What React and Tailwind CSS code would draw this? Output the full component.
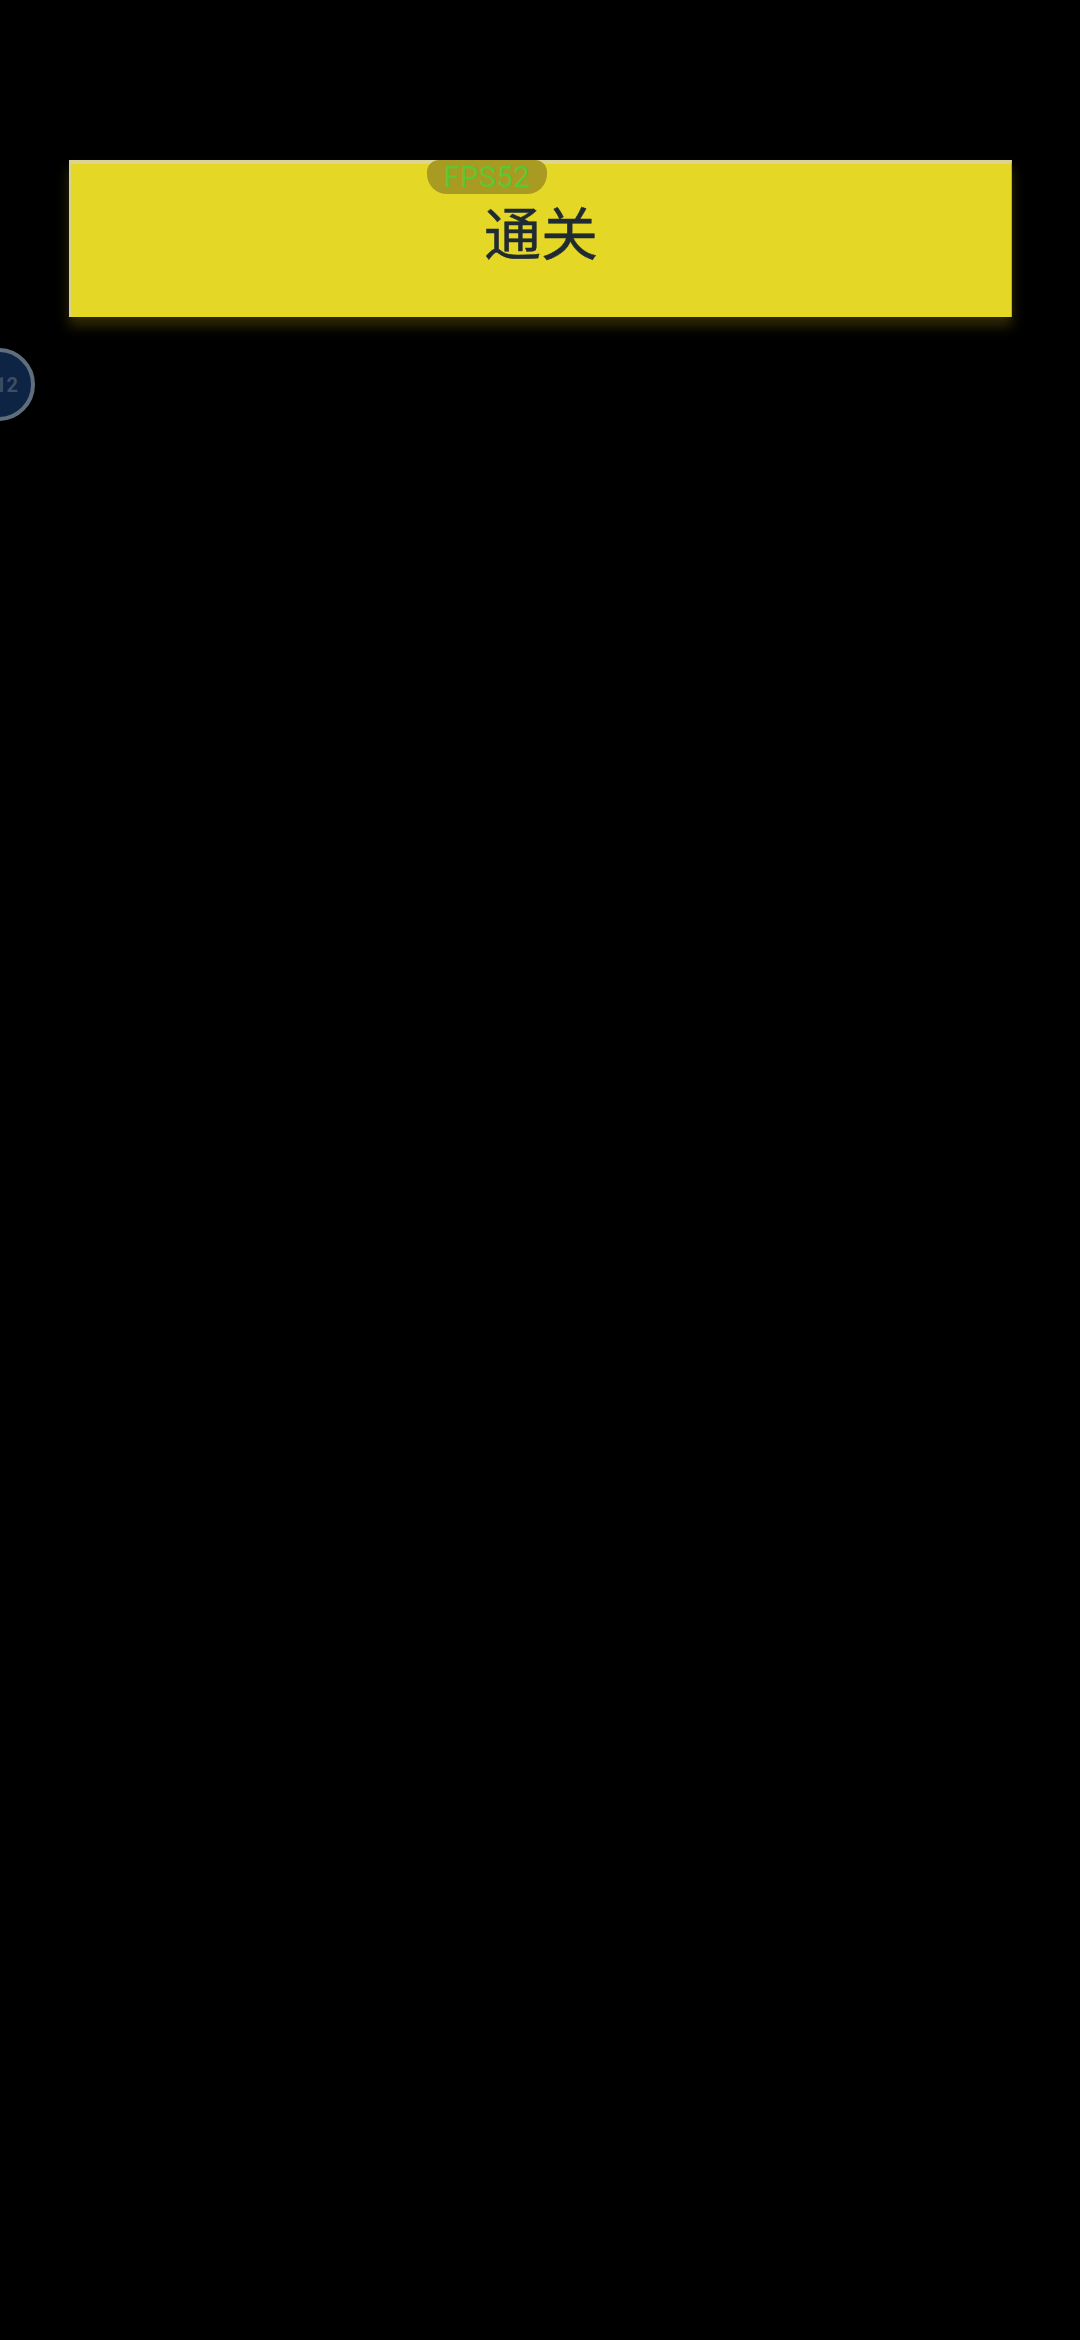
const App = () => {
    return (
        <div className="relative h-[2340px] w-[1080px] overflow-hidden bg-black pt-[160px] pl-[69px] pr-[68px] font-['Roboto','Noto_Sans_CJK_SC',sans-serif]">
            {/* Level cleared banner */}
            <div className="relative flex h-[157px] items-start justify-center border-t-[4px] border-l-[2px] border-r-[1px] border-t-[#dcd491] border-l-[#d9d38e] border-r-[#b8ae30] bg-[#e5d726] pt-[33px] shadow-[0_9px_12px_rgba(110,95,10,0.45)]">
                <span className="text-[57px] leading-[78px] text-[#1f2a33] [-webkit-text-stroke:0.5px_#1f2a33]">通关</span>
            </div>

            {/* FPS pill */}
            <div className="absolute left-[427px] top-[160px] flex h-[34px] w-[120px] items-center justify-center rounded-b-[20px] rounded-t-[12px] bg-[#a99b22]">
                <span className="text-[29px] leading-none tracking-[0.5px] text-[#5ac733]">FPS52</span>
            </div>

            {/* Floating side button */}
            <div className="absolute left-[-38px] top-[348px] flex h-[73px] w-[73px] items-center justify-end rounded-full border-[4px] border-[#5f6e7c] bg-[#0d2444] pr-[13px]">
                <span className="text-[20px] font-bold leading-none text-[#3d4f66]">12</span>
            </div>
        </div>
    );
};

export default App;
